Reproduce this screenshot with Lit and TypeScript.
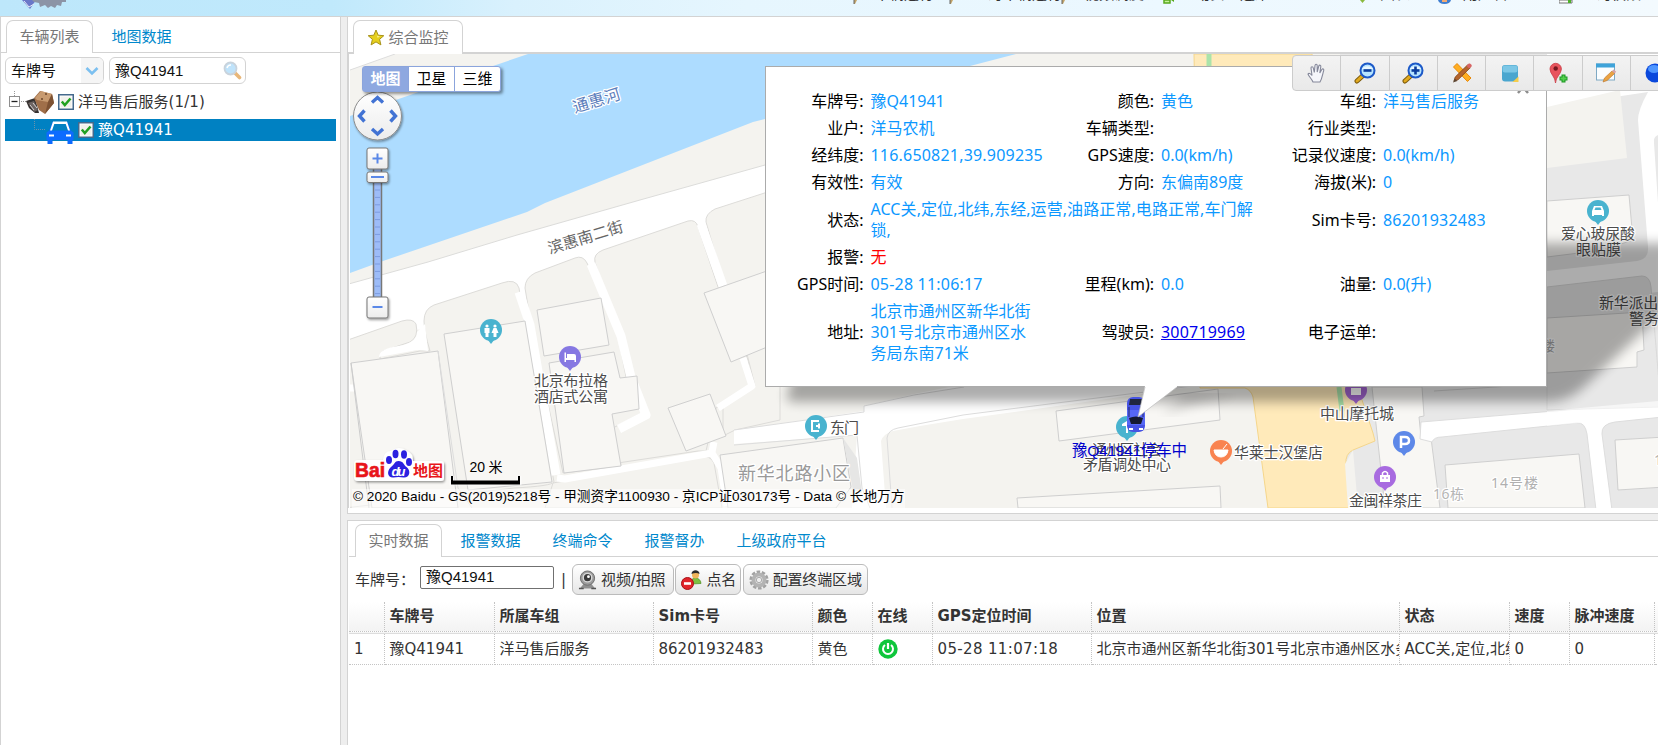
import { LitElement, html, svg, css } from "lit";
import { customElement } from "lit/decorators.js";

const cjk = css`"Noto Sans CJK SC", sans-serif`;

const NAV = [
  { x: 853, label: "", kind: "pen" },
  { x: 874, label: "车辆运行", w: 62 },
  { x: 949, label: "", kind: "pen" },
  { x: 972, label: "查询车辆运行", w: 92 },
  { x: 1061, label: "", kind: "pen" },
  { x: 1084, label: "视频调度", w: 62 },
  { x: 1163, label: "", kind: "plus" },
  { x: 1180, label: "主动安全运维", w: 92 },
  { x: 1360, label: "", kind: "down" },
  { x: 1380, label: "图表", w: 32 },
  { x: 1438, label: "", kind: "user" },
  { x: 1463, label: "用户管理", w: 62 },
  { x: 1559, label: "", kind: "sheet" },
  { x: 1581, label: "查询权限", w: 62 },
];

const INFO: [string, string, string?, number?][] = [
  ["车牌号", "豫Q41941"], ["颜色", "黄色"], ["车组", "洋马售后服务"],
  ["业户", "洋马农机"], ["车辆类型", ""], ["行业类型", ""],
  ["经纬度", "116.650821,39.909235"], ["GPS速度", "0.0(km/h)"], ["记录仪速度", "0.0(km/h)"],
  ["有效性", "有效"], ["方向", "东偏南89度"], ["海拔(米)", "0"],
  ["状态", "ACC关,定位,北纬,东经,运营,油路正常,电路正常,车门解锁,", "", 3], ["Sim卡号", "86201932483"],
  ["报警", "无", "red", 5],
  ["GPS时间", "05-28 11:06:17"], ["里程(km)", "0.0"], ["油量", "0.0(升)"],
  ["地址", "北京市通州区新华北街301号北京市通州区水务局东南71米", "addr"], ["驾驶员", "300719969", "link"], ["电子运单", ""],
];

const COLS = ["", "车牌号", "所属车组", "Sim卡号", "颜色", "在线", "GPS定位时间", "位置", "状态", "速度", "脉冲速度", ""];
const ROW = ["1", "豫Q41941", "洋马售后服务", "86201932483", "黄色", "@", "05-28 11:07:18",
  "北京市通州区新华北街301号北京市通州区水务局", "ACC关,定位,北纬", "0", "0", ""];

const star = svg`<svg width="18" height="17" viewBox="0 0 17 17"><path d="M8.500 1l2.200 5.200 5.600.5-4.200 3.600 1.300 5.600-4.900-3-4.900 3 1.300-5.600L.7 6.700l5.600-.5z" fill="#e6cf1c" stroke="#a8931a" stroke-width="1"/><path d="M8.500 3.500l1.300 3.600 2.700.4-2.400 1.200z" fill="#fdf7a0"/></svg>`;
const search = svg`<svg width="19" height="19" viewBox="0 0 19 19"><path d="M11.500 11.500l5 5" stroke="#e8b77a" stroke-width="3.600" stroke-linecap="round"/><circle cx="7.500" cy="7.500" r="6" fill="#bfe3fb" stroke="#c9d3dc" stroke-width="1.800"/><path d="M4 7a4 4 0 0 1 4-3" stroke="#fff" stroke-width="1.500" fill="none"/></svg>`;
const check = svg`<svg width="16" height="16" viewBox="0 0 16 16"><rect x=".75" y=".75" width="14.500" height="14.500" fill="#fff" stroke="#44698c" stroke-width="1.500"/><rect x="2.500" y="2.500" width="11" height="11" fill="#f1f1ec"/><path d="M3.800 7.500l3 3.500 5.700-6.500" fill="none" stroke="#21a121" stroke-width="2.500"/></svg>`;
const crate = svg`<svg width="29" height="24" viewBox="0 0 29 24"><path d="M0 11l9-3 4 15-4 0-6-5z" fill="#35302f"/><path d="M2 13l6-2 4 9-4 2z" fill="#6d6462"/><path d="M8 8l6-7 12 3 2 9-9 11-6-4z" fill="#a06f49"/><path d="M9 8l6-7 11 3-4 8-11-2z" fill="#c79a70"/><path d="M22 12l4-8 2 9-9 11z" fill="#7d5233"/><circle cx="16" cy="9" r="1" fill="#6b462b"/><circle cx="20" cy="4" r="1" fill="#6b462b"/><path d="M4 15l4 5M7 13l4 5" stroke="#eee" stroke-width=".8"/></svg>`;
const carFront = svg`<svg width="28" height="24" viewBox="0 0 28 24"><path d="M6.500 2h15l3.300 8.500 2.700 2V20h-1v4h-5v-4H6.500v4h-5v-4h-1v-7.500l2.700-2z" fill="#0d6bff"/><path d="M8 3.500h12l2.500 7H5.500z" fill="#0081c2"/><path d="M7 1.500h14l3 9h-2L19.700 4H8.300L6 10.500H4z" fill="#fff"/><path d="M3 15.500h5M20 15.500h5" stroke="#fff" stroke-width="1.800"/></svg>`;

const mag = (plus: boolean) => svg`<svg width="22" height="22" viewBox="0 0 22 22"><path d="M3 19l5.500-5" stroke="#7c5a0c" stroke-width="5" stroke-linecap="round"/><path d="M3 19l5-4.600" stroke="#e0a91f" stroke-width="3" stroke-linecap="round"/><circle cx="13.500" cy="8.500" r="7" fill="#b6e4ff" stroke="#1c59c8" stroke-width="2"/><path d="M8 7a6 4.500 0 0 1 11 0z" fill="#fff" opacity=".7"/><path d="M9.500 8.500h8" stroke="#0b3c9d" stroke-width="2.600"/>${plus ? svg`<path d="M13.500 4.500v8" stroke="#0b3c9d" stroke-width="2.600"/>` : ""}</svg>`;

const TOOLS = [
  svg`<svg width="22" height="22" viewBox="0 0 22 22"><path d="M7 20c-1-3-4-5-5-8 1-1.500 3 0 4 1.500L5 6c0-1.700 2-1.700 2.300 0l1 4.500L9 3.500c.3-1.700 2.200-1.500 2.200.2V10l1.600-6c.6-1.500 2.300-1 2 .7L13.800 11l2-3.500c1-1.200 2.400-.3 1.900 1.100-1 3-1.500 8-3.700 11.400z" fill="#f5f6fb" stroke="#85889a" stroke-width="1.100"/></svg>`,
  mag(false),
  mag(true),
  svg`<svg width="22" height="22" viewBox="0 0 22 22"><path d="M2.500 5L6 1.500 20 16l-3.500 3.500z" fill="#ffae21" stroke="#e8890a"/><path d="M3 19l1.200-4L16.500 3l2.800 2.700L7 17.800z" fill="#b4642c" stroke="#814114" stroke-width=".8"/><path d="M15.500 4l2-2.200c1.200-1.200 4.200 1.400 3 2.800l-2.300 2z" fill="#d86464"/><path d="M2 20.500l1.700-4 2.700 2.500z" fill="#5c4633"/></svg>`,
  svg`<svg width="22" height="22" viewBox="0 0 22 22"><rect x="3" y="3" width="16" height="16.500" rx="3" fill="#4aa6cf"/><rect x="3.500" y="3.500" width="15" height="7" rx="2.500" fill="#7cc7e6"/><path d="M19.500 14.500v5.500h-6z" fill="#f5cd4c"/></svg>`,
  svg`<svg width="22" height="22" viewBox="0 0 22 22"><path d="M8.500 21C8.500 15 3 12 3 7a5.700 5.700 0 0 1 11.400 0c0 5-5.900 8-5.900 14z" fill="#e8545d" stroke="#c93a44" stroke-width=".8"/><circle cx="8.700" cy="6.500" r="2.200" fill="#751820"/><path d="M16.500 12.500v8M12.500 16.500h8" stroke="#1c9a24" stroke-width="4"/><path d="M16.500 13.500v6M13.500 16.500h6" stroke="#56cf4f" stroke-width="1.800"/></svg>`,
  svg`<svg width="22" height="22" viewBox="0 0 22 22"><rect x="1.500" y="2" width="18" height="16" fill="#fafdff" stroke="#7fa9c4"/><path d="M1 1.500h19v4H1z" fill="#3fa3d9"/><path d="M8 20l1.500-4L17 9l2.600 2.500-7.500 7z" fill="#eaa343" stroke="#b9722a" stroke-width=".6"/><path d="M17 9l1.500-1.500 2.700 2.300-1.600 1.700z" fill="#d9a4a8"/></svg>`,
  svg`<svg width="22" height="22" viewBox="0 0 22 22"><circle cx="11" cy="11" r="9.500" fill="#0a48dc"/><ellipse cx="10" cy="7" rx="6" ry="4" fill="#4e96ff"/></svg>`,
];

const BTNS = [
  { w: 102, label: "视频/拍照", icon: svg`<svg width="19" height="20" viewBox="0 0 20 20"><path d="M2 19l4-5h8l4 5z" fill="#909090"/><path d="M1 19h5M14 19h5" stroke="#555" stroke-width="1.500"/><circle cx="10" cy="8" r="7.500" fill="#9b9b9b" stroke="#6e6e6e"/><circle cx="10" cy="7.500" r="4.500" fill="#3b3b3b" stroke="#d8d8d8" stroke-width="1.500"/><circle cx="11" cy="6.500" r="1.500" fill="#fff"/></svg>` },
  { w: 66, label: "点名", icon: svg`<svg width="21" height="20" viewBox="0 0 21 20"><path d="M10 14c0-5 2-6 4.500-6S20 10 20 13.500z" fill="#7dc242" stroke="#4f8d22" stroke-width=".7"/><circle cx="14.500" cy="5" r="3.500" fill="#f0b55b"/><path d="M10.500 4c0-5 8-5 8 0-2-1.500-5-1.500-8 0z" fill="#2b2b2b"/><circle cx="6.500" cy="13.500" r="6" fill="#e0242a" stroke="#a80e14"/><path d="M3 13.500h7" stroke="#fff" stroke-width="2.600"/></svg>` },
  { w: 125, label: "配置终端区域", icon: svg`<svg width="20" height="20" viewBox="0 0 20 20"><circle cx="10" cy="10" r="7.800" fill="none" stroke="#a2a2a2" stroke-width="3.600" stroke-dasharray="3.300 1.600"/><circle cx="10" cy="10" r="5.500" fill="none" stroke="#b3b3b3" stroke-width="4"/><circle cx="10" cy="10" r="2.700" fill="#ededed" stroke="#8e8e8e" stroke-width=".7"/></svg>` },
];

const pin = (x: number, y: number, c: string, g: unknown) => svg`<g transform="translate(${x} ${y})"><path d="M-3.500 9.500L0 14l3.500-4.500z" fill=${c}/><circle r="11" fill=${c}/>${g}</g>`;
const lab = (x: number, y: number, w: number, t: string, c = "#4c4c4c", size = 15, extra = "") => svg`<text class="lab" x=${x} y=${y - 1} fill=${c} font-size=${size} textLength=${w} transform=${extra}>${t}</text>`;

@customElement("monitor-map")
class MonitorMap extends LitElement {
  static styles = css`
    :host { display: block; position: relative; width: 1308px; height: 454px; overflow: hidden; font: 15px/21px "Liberation Sans", ${cjk}; }
    svg { display: block; }
    .over { position: absolute; }
    .lab { font-family: "Noto Sans", ${cjk}; paint-order: stroke; stroke: #fff; stroke-width: 2.5px; stroke-linejoin: round; }
    .logo { font-family: "Liberation Sans", ${cjk}; font-weight: 700; }
    .b { fill: #f8f7f4; stroke: #cfcfcf; }
    .l { fill: #f4f3ef; stroke: #dddcd9; }
    .g { fill: #e8e8e8; stroke: #dadada; }
    .w { fill: #fff; }
    .types { left: 12px; top: 12px; display: flex; height: 24px; border: 1px solid #8ba4dc; border-radius: 3px; background: #fff; box-shadow: 2px 2px 3px rgba(0,0,0,.4); }
    .types span { width: 45px; text-align: center; line-height: 24px; color: #000; border-left: 1px solid #8ba4dc; }
    .types .on { border: 0; background: #8ea8e0; color: #fff; font-weight: 700; }
    .copy { left: 2px; bottom: 0; height: 19px; line-height: 16px; font-size: 13.65px; padding: 0 1px; white-space: nowrap; background: rgba(255,255,255,.5); color: #000; }
    .popup { left: 415px; top: 12px; width: 782px; height: 321px; border: 1px solid #ababab; background: #fff; box-sizing: border-box; padding-top: 21px; font: 16px/21px "Noto Sans", ${cjk}; color: #000; }
    .grid { display: grid; grid-template-columns: 97.500px 173.500px 117px 100px 122px 150px; align-items: center; }
    .k { text-align: right; white-space: nowrap; padding: 3px 0; }
    .v { color: #0c98ff; padding: 3px 0 3px 7px; min-height: 21px; }
    .num { letter-spacing: .2px; }
    .s3 { grid-column: span 3; width: 386px; word-break: break-all; letter-spacing: .08px; }
    .s5 { grid-column: span 5; }
    .red { color: #f00; }
    .addr { width: 164px; word-break: break-all; }
    .link { color: #00e; text-decoration: underline; }
    .tools { left: 942px; top: 1px; display: flex; box-sizing: border-box; height: 36px; border: 1px solid #ccc; border-radius: 4px; background: linear-gradient(#f3f3f3, #e9e9e9); }
    .tools span { width: 47.300px; border-right: 1px solid #ccc; display: flex; align-items: center; justify-content: center; }
  `;

  private base() {
    return svg`
      <rect x="350" y="54" width="1308" height="454" fill="#f4f3ef"/>
      <path class="w" d="M350 54h45l-45 16z"/><path d="M350 70l45-16" stroke="#ddd"/>
      <path fill="#addcff" d="M528 54L493 66 350 116v157l33-12L527 212l18-9L753 122 765 119l165-40 40-13 46-12z"/>
      <path class="w" stroke="#dcdcda" d="M345 285L428 262 517 235 640 200 790 158v30L706 212 350 312z"/>
      <path class="w" d="M350 310L430 285 600 240 780 188v60L350 345z"/>
      <path class="l" d="M345 341L402 321q11-3 14 3 3 13-6 18l-27 9q-4 4-3 8l40-8 10 0q-6-20-6-30 0-12 10-16l68-22q14-5 17 5l5 32 30 162q-2 4-40 6L345 508z"/>
      <path class="l" d="M563 473L532 330 525 288q0-10 10-15l40-15q8-3 12 5l30 67 9 47 22 24 2 12-33 18 4 35z"/>
      <path class="l" d="M595 262q-2-8 8-12l85-29q8-2 10 6l20 60 30 73 4 27-36 21-10 43-8 0-87 13-2-34 33-17q4-4-1-14l-14-29-13-47z"/>
      <path class="l" d="M724 283L706 222q-1-8 9-13L780 188V420L735 430l-12 6 0-30 32-20-10-40z"/>
      <path d="M553 483L700 456q10-1 14 7L722 508H545z" class="l"/>
      <g stroke="#fff" fill="none" stroke-width="9" stroke-linejoin="round">
        <path d="M591 264l30 72 10 41 15 38-27 14M519 292l11 33 26 150M701 224l22 62"/>
        <path d="M557 478l8 1 147-26 9 15 6 38M743 358l9 28-34 22M714 442l-2 10M350 388h4" stroke-width="7"/>
      </g>
      <path class="w" d="M379 357q0-7 14-10 24-3 24-15l8-8 3 27q-10-2-16 0z"/>
      <path class="b" d="M351 363l87-12 20 157H372z"/><path d="M351 363l18 145" stroke="#ccc"/>
      <path class="b" d="M444 334l81-13 27 161-84 8z"/><path d="M438 351l20 137 14 20" stroke="#ddd" fill="none"/>
      <path class="b" d="M537 310l64-12 8 47-65 11z"/>
      <path class="b" d="M549 363l65-11 6 26 17-2 2 33-27 5 9 52-57 7z"/>
      <path class="b" d="M704 293l80-28V340L731 362z"/>
      <path class="b" d="M668 408l42-14 16 42-40 15z"/>
      <path class="w" d="M734 430l30-4 100-15v-5l50-12 50-10 255-1-162 23-94 13-43 7-27 5q-10 3-12 10l5 67h-34L857 435l-123 9z"/>
      <path fill="none" stroke="#ddd" d="M734 445l123-10 5 53 8 20M892 508l-5-70q1-8 11-10l65-13 94-12 160-20M734 430l130-18v-6l50-11 50-8"/>
      <path class="b" d="M720 455l123-17 8 49-15 21H728z"/><path fill="#e6e6e5" d="M843 438l14 20 5 35-9-3z"/>
      <path class="b" d="M1056 411l162-22 2 31-161 21z"/><path class="b" d="M1017 498l203-12 1 22H1018z"/>
      <path fill="#e8e8e8" d="M1340 54H1658V508H1340z"/>
      <path fill="#ffeaba" stroke="#f5d68b" d="M1194 54h118l46 334 15 45 2 8-22 9q-8 4-7 14l4 44h-82l-15-111q-2-7-8-9h-45z"/>
      <path d="M1209 54v12M1339 387l3 24" stroke="#abe3aa" stroke-width="5"/>
      <path class="b" d="M1372 387h50l2 29-5 1 2 20 10 1 9 70h-55z"/>
      <path fill="#f4f3ef" d="M1353 450l5 58h-10l-3-44z"/>
      <path class="w" stroke="#ddd" d="M1421 422L1663 402v15l-48 5q-14 2-13 12l10 76h-16l-9-76q-2-12-10-11l-135 14q-8 0-10 5l-12-3z"/>
      <path class="b" d="M1445 465l134-11 6 54H1448z"/><path class="b" d="M1615 440l50-3v50l-47 3z"/>
      <path class="w" d="M1547 54h111v38h-10l-40 6-61 16z"/>
      <path fill="#f4f3ef" d="M1547 107l73-17 7 68-80 10z"/>
      <path class="w" d="M1648 92h10v200l-111 12v-33l90-10q12-2 11-14l-10-127q0-10 10-28z"/>
      <path fill="#e8e8e8" d="M1658 135q-5 2-4 8l4 60z"/>
      <path class="b" d="M1547 201l82-6 4 45-30 10-56 7z"/>
      <path class="g" d="M1547 287l95-11q8 0 9 11l10 120-114 3z"/>
      <path class="b" d="M1547 318l95-6 2 38-7 2v15l-90 6z"/>
      <path d="M1434 391l77-5" stroke="#ccc"/>
      <path class="w" d="M1547 411l111-10v15l-111 10z" opacity=".6"/>
    `;
  }

  private pois() {
    return svg`
      ${lab(0, 0, 49, "通惠河", "#5b7dbb", 16, "translate(575 114) rotate(-17)")}
      ${lab(0, 0, 78, "滨惠南二街", "#666", 15.5, "translate(550 255) rotate(-17)")}
      ${pin(491, 330, "#49b3cf", svg`<g fill="#fff"><circle cx="-4" cy="-4" r="1.600"/><circle cx="4" cy="-4" r="1.600"/><path d="M-6.500-2h5v5h-1v4h-3V3h-1zM2.500-2h3l2 5h-2v4h-3V3h-2z"/></g>`)}
      ${pin(570, 357, "#8678e2", svg`<path d="M-5.500 5v-9.500H-4V1h1v-4h7q2 0 2 2v6H4.500V3H-4v2z" fill="#fff"/>`)}
      ${lab(534, 387, 74, "北京布拉格")}${lab(534, 403, 74, "酒店式公寓")}
      ${pin(816, 426, "#49b3cf", svg`<path d="M3-5h-7V5h7M0 0h4M3-2.500v5" stroke="#fff" fill="none" stroke-width="2"/>`)}
      ${lab(830, 434, 29, "东门")}
      ${lab(738, 481, 112, "新华北路小区", "#999", 18)}
      ${pin(1127, 427, "#49b3cf", svg`<path d="M-5-3l5-3 5 3v2h-4v7h-2v-7h-4z" fill="#fff"/>`)}
      ${lab(1092, 456, 70, "通州区社会")}${lab(1083, 471, 88, "矛盾调处中心")}
      ${pin(1221, 451, "#f98350", svg`<path d="M-7-1H7Q6 6 0 6T-7-1zM2-2l4-5" fill="#fff" stroke="#fff"/>`)}
      ${lab(1234, 459, 89, "华莱士汉堡店")}
      ${pin(1356, 390, "#a164cf", svg`<path d="M-5-2H5v7H-5z" fill="#fff"/>`)}
      ${lab(1320, 420, 74, "中山摩托城")}
      ${pin(1404, 442, "#5d88e8", svg`<path d="M-3 6v-11H1q4 0 4 3.500T1 2H-3" fill="none" stroke="#fff" stroke-width="2.500"/>`)}
      ${pin(1385, 477, "#a86be0", svg`<path d="M-5-2H5v7H-5z" fill="#fff"/><path d="M-2.500-1.500V-4q2.500-3 5 0v2.500" fill="none" stroke="#fff" stroke-width="1.500"/><path d="M-2 0v2M2 0v2" stroke="#a86be0"/>`)}
      ${lab(1349, 507, 73, "金闽祥茶庄")}
      ${lab(1433, 500, 31, "16栋", "#b5b5b5", 14)}${lab(1491, 489, 47, "14号楼", "#b0b0b0", 14)}${lab(1654, 466, 47, "15号楼", "#b0b0b0", 14)}
      ${pin(1598, 211, "#49b3cf", svg`<path d="M-6 5V0l2-5h8l2 5v5h-2V4h-8v1z" fill="#fff"/><path d="M-3.500-1l1-2.500h5L3.500-1z" fill="#49b3cf"/>`)}
      ${lab(1561, 240, 74, "爱心玻尿酸")}${lab(1576, 256, 45, "眼贴膜")}
      ${lab(1599, 309, 74, "新华派出所")}${lab(1629, 325, 45, "警务站")}${lab(1524, 352, 31, "1号楼", "#aaa", 14)}
    `;
  }

  private controls() {
    return svg`
      <g filter="url(#sm)"><circle cx="377.500" cy="116" r="24" fill="url(#btn)" stroke="#8d8d8d"/></g>
      <path fill="none" stroke="#4273d4" stroke-width="3.400" d="M372 102.500l5.500-5 5.500 5M372 129l5.500 5 5.500-5M364.500 110.500l-5 5.500 5 5.500M390.500 110.500l5 5.500-5 5.500"/>
      <path d="M373.500 165h8v135h-8z" fill="#9dbcf8" stroke="#777" stroke-width="1.500"/>
      ${Array.from({ length: 15 }, (_, i) => svg`<path d="M375 ${190 + i * 7.400}h5" stroke="#7c9ce0"/>`)}
      <g filter="url(#sm)" stroke="#777" fill="url(#btn)"><rect x="367" y="148" width="21" height="21" rx="2"/><rect x="367" y="172" width="21" height="10.500" rx="2"/><rect x="367" y="297" width="21" height="21" rx="2"/></g>
      <path d="M372.500 158.500h10M377.500 153.500v10M371 177h13M372.500 307h10" stroke="#5a88e8" stroke-width="2"/>
      <path d="M358 460h25q1-9 8-9 8-6 16 0 6 2 6 10h28q3 0 3 3v14q0 3-3 3H358q-4 0-4-4v-13q0-4 4-4z" fill="#fff" filter="url(#sm)"/>
      <g fill="#2b21e0"><ellipse cx="389" cy="460" rx="3" ry="4"/><ellipse cx="395.500" cy="454" rx="3" ry="4.200"/><ellipse cx="404" cy="454.500" rx="3" ry="4.200"/><ellipse cx="409" cy="462" rx="3" ry="4"/><path d="M398.500 461c5 0 5 4 8 6 5 4 3 11-3 10.500q-5-1-10 0c-6 .5-7-6-3-10 4-3 4-6.500 8-6.500z"/></g>
      <text class="logo" x="355" y="477" font-size="20" fill="#e8151a" stroke="#e8151a" stroke-width=".7" textLength="30" lengthAdjust="spacingAndGlyphs">Bai</text>
      <text x="391.500" y="476" font-size="13" fill="#fff" font-weight="700" font-style="italic" textLength="14">du</text>
      <text class="logo" x="413" y="476" font-size="15" fill="#e8151a" textLength="30">地图</text>
      <text x="469.500" y="472" font-size="14" textLength="33">20 米</text>
      <path d="M452 476v7h67v-7" stroke="#fff" stroke-width="5" fill="none" opacity=".6"/><path d="M452 476v7M519 476v7" stroke="#000" stroke-width="2"/><path d="M451 482.500h69" stroke="#000" stroke-width="4"/>
    `;
  }

  render() {
    return html`
      <svg width="1308" height="454" viewBox="350 54 1308 454">
        <defs>
          <linearGradient id="btn" x2="0" y2="1"><stop stop-color="#fff"/><stop offset="1" stop-color="#ececec"/></linearGradient>
          <filter id="sm" x="-20%" y="-20%" width="150%" height="150%"><feDropShadow dx="1" dy="1.500" stdDeviation="1.200" flood-opacity=".4"/></filter>
          <filter id="blur" x="-10%" y="-10%" width="120%" height="120%"><feGaussianBlur stdDeviation="6"/></filter>
        </defs>
        ${this.base()}${this.pois()}
        <path filter="url(#blur)" opacity=".32" d="M795 370L786 398q4 5 10 4L1550 402q20-1 36-17L1670 306V243H1500V370z"/>
        <path filter="url(#blur)" opacity=".15" d="M1185 395h50q-30 6-74 20z"/>
        ${this.controls()}
        <g transform="translate(1136 415)"><rect x="-9" y="-18" width="18" height="35" rx="6" fill="#4653e4"/><rect x="-9" y="-5" width="18" height="15" fill="#5667f5"/><path d="M-6-16H6l1 6H-7z" fill="#20263e"/><path d="M-7 3q7-3 14 0l-2 6H-5z" fill="#151a30"/><path d="M-7-8V2M7-8V2" stroke="#252b70"/><path d="M-7 14h4M3 14h4" stroke="#fff" stroke-width="2"/></g>
        <text x="1072" y="456" font-size="15.500" fill="#00c" textLength="115">豫Q41941停车中</text>
      </svg>
      <div class="over types"><span class="on">地图</span><span>卫星</span><span>三维</span></div>
      <div class="over copy">© 2020 Baidu - GS(2019)5218号 - 甲测资字1100930 - 京ICP证030173号 - Data © 长地万方</div>
      <div class="over popup"><div class="grid">
        ${INFO.map(([k, v, c = "", s]) => html`<div class="k">${k}:</div><div class="v ${c} ${s ? "s" + s : ""} ${/^[\d.,:\- ]+$/.test(v) ? "num" : ""}">${v}</div>`)}
      </div></div>
      <svg class="over" style="left:765px;top:330px" width="64" height="36" viewBox="1115 384 64 36"><path d="M1145 384v2L1138 417 1177 387v-3z" fill="#fff"/><path d="M1145 387L1138 417l39-30" fill="none" stroke="#bbb" stroke-width=".7"/></svg>
      <svg class="over" style="left:1166px;top:26px" width="14" height="14" viewBox="0 0 14 14"><path d="M2 1l10 12M12 1L2 13" stroke="#8c8c8c" stroke-width="2.500"/></svg>
      <div class="over tools">${TOOLS.map((t) => html`<span>${t}</span>`)}</div>
    `;
  }
}

@customElement("app-root")
class AppRoot extends LitElement {
  static styles = css`
    :host { display: flex; flex-direction: column; width: 1658px; height: 745px; overflow: hidden; background: #fff; color: #333; font: 15px/20px "DejaVu Sans", ${cjk}; }
    svg { display: block; flex: none; }
    header { height: 16px; flex: none; position: relative; overflow: hidden; background: linear-gradient(90deg, #bde7fb, #c0e9fc 20%, #d9f1fd 31%, #e6f6fe 45%, #ecf8ff 70%, #f3fafe); border-bottom: 1px solid #d3d3d3; }
    header > * { position: absolute; top: -14px; white-space: nowrap; line-height: 16px; }
    header svg { top: 0; }
    main { flex: 1; display: grid; grid-template-columns: 341px 6px 1fr; min-height: 0; background: #eee; }
    .left { background: #fff; border: solid #d3d3d3; border-width: 0 1px; }
    .tabs { display: flex; gap: 5.500px; height: 36px; box-sizing: border-box; border-bottom: 1px solid #d3d3d3; padding: 3px 0 0 5px; }
    .tab { box-sizing: border-box; height: 33px; line-height: 32px; padding: 0 12.500px; border: 1px solid transparent; color: #0088cc; white-space: nowrap; display: flex; align-items: center; gap: 5px; }
    .tab + .tab { padding-left: 12px; }
    .tab.on { background: #fff; border-color: #d3d3d3; border-bottom: 0; border-radius: 7px 7px 0 0; color: #777; }
    .row { display: flex; align-items: center; }
    .search { gap: 5px; padding: 4px 0 0 4px; font-family: "Liberation Sans", ${cjk}; color: #111; }
    .box { box-sizing: border-box; border: 1px solid #d3d3d3; border-radius: 6px; height: 27px; display: flex; align-items: center; justify-content: space-between; padding-left: 5px; overflow: hidden; }
    .arrow { width: 22px; height: 27px; background: #f5f5f5; display: flex; align-items: center; justify-content: center; }
    .tree { padding: 5px 4px; }
    .node { height: 25px; padding-left: 4px; letter-spacing: .1px; }
    .node.sel { height: 22px; margin-top: 5px; background: #0081c2; color: #fff; padding-left: 27px; margin-bottom: 2px; letter-spacing: .05px; line-height: 24px; }
    .sel svg + svg { margin-top: 3px; }
    .right { display: flex; flex-direction: column; min-width: 0; }
    .pane { background: #fff; border-left: 1px solid #d3d3d3; }
    .top { height: 497px; border-bottom: 1px solid #d3d3d3; box-sizing: border-box; }
    .top .tabs { height: 37px; border-bottom-width: 2px; }
    .top .tab.on { height: 34px; gap: 4px; padding-right: 13px; }
    .mapwrap { border-left: 1px solid #d3d3d3; padding-left: 1px; }
    .bottom { margin-top: 6px; flex: 1; border-top: 1px solid #d3d3d3; padding-left: 1px; }
    .bottom .tabs { padding-left: 6px; }
    .bar { height: 45px; padding-left: 6px; }
    .inp { box-sizing: border-box; width: 134px; height: 23px; border: 1px solid #707070; border-radius: 2px; padding-left: 5px; line-height: 20px; margin: -4px 7px 0 5px; color: #111; font-family: "Liberation Sans", ${cjk}; }
    .btn { box-sizing: border-box; height: 31px; border: 1px solid #bbb; border-radius: 6px; background: linear-gradient(#fff, #e6e6e6); display: flex; align-items: center; gap: 4px; padding-left: 5px; margin-right: 1.300px; font-size: 15px; white-space: nowrap; letter-spacing: -.15px; }
    .tbl { display: grid; grid-template-columns: 35.500px 110px 159px 159px 60px 60px 159px 308px 110px 60px 85px 1fr; }
    .th, .td { box-sizing: border-box; border-right: 1px dotted #c4c4c4; border-bottom: 1px dotted #c4c4c4; padding-left: 5px; overflow: hidden; white-space: nowrap; }
    .th { height: 30px; line-height: 29px; font-weight: 700; background: linear-gradient(#fff, #f3f3f3); }
    .td { height: 31px; line-height: 31px; display: flex; align-items: center; }
    .time { letter-spacing: .35px; }
    .gap { grid-column: 1 / -1; height: 2px; border-bottom: 1px solid #ddd; box-sizing: border-box; background: #f6f6f6; }
  `;

  private navIcon(x: number, kind: string) {
    const art: Record<string, unknown> = {
      pen: svg`<path d="M1 0h3L2 4H1z" fill="#c3a468"/><path d="M1 0v4" stroke="#666"/>`,
      plus: svg`<path d="M1 0h6v3H1z" fill="#c6f09b" stroke="#58a91d" stroke-width="1.500"/><path d="M8 0h3v2z" fill="#58a91d"/>`,
      down: svg`<path d="M0 0h5L2.500 3z" fill="#8ab93e"/>`,
      user: svg`<path d="M0 0h13q-1 4-6.500 4T0 0z" fill="#3f7ed0"/><path d="M4 0h5v2H4z" fill="#f3aa72"/>`,
      sheet: svg`<path d="M0 0h13v3H0z" fill="#fff" stroke="#777"/><path d="M9 0h3v3H9z" fill="#4db128"/>`,
    };
    return html`<svg style="left:${x}px" width="14" height="6">${art[kind]}</svg>`;
  }

  render() {
    return html`
      <header>
        <svg width="60" height="12" style="left:20px"><path d="M2 0h14l-6 9z" fill="#6a78c8"/><path d="M12 0h34v2h-4l-1 4-4-1-2 3-4-2-3 2-3-3-5 2-1-4-5-1z" fill="#8c94a6"/><path d="M4 1l5 6 5-3" stroke="#e7eaf8" fill="none"/></svg>
        ${NAV.map((n) => n.kind ? this.navIcon(n.x, n.kind) : html`<span style="left:${n.x}px;width:${n.w}px">${n.label}</span>`)}
      </header>
      <main>
        <section class="left">
          <div class="tabs"><div class="tab on">车辆列表</div><div class="tab">地图数据</div></div>
          <div class="row search">
            <div class="box" style="width:99px">车牌号<span class="arrow"><svg width="14" height="10" viewBox="0 0 14 10"><path d="M1.500 2L7 7.500 12.500 2" fill="none" stroke="#7cc0f0" stroke-width="2.600"/></svg></span></div>
            <div class="box" style="width:137px;padding-right:3px">豫Q41941${search}</div>
          </div>
          <div class="tree">
            <div class="row node">
              <svg width="17" height="25" viewBox="0 0 17 25"><path d="M5.500 2v5M12 12.500h5" stroke="#999" stroke-dasharray="1 1"/><rect x=".5" y="7.500" width="10" height="10" fill="#fff" stroke="#8e8e8e"/><path d="M2.500 12.500h6" stroke="#222" stroke-width="1.300"/></svg>
              ${crate}<span style="width:3px"></span>${check}<span style="width:4px"></span>洋马售后服务(1/1)
            </div>
            <div class="row node sel"><svg width="14" height="22"><path d="M2.500 0v10.500H14" stroke="#6c93ab" fill="none" stroke-dasharray="1 1"/></svg>${carFront}<span style="width:4px"></span>${check}<span style="width:4px"></span>豫Q41941</div>
          </div>
        </section>
        <span></span>
        <section class="right">
          <div class="pane top">
            <div class="tabs"><div class="tab on">${star}综合监控</div></div>
            <div class="mapwrap"><monitor-map></monitor-map></div>
          </div>
          <div class="pane bottom">
            <div class="tabs"><div class="tab on">实时数据</div><div class="tab">报警数据</div><div class="tab">终端命令</div><div class="tab">报警督办</div><div class="tab">上级政府平台</div></div>
            <div class="row bar">车牌号：<div class="inp">豫Q41941</div>|<span style="width:6px"></span>
              ${BTNS.map((b) => html`<div class="btn" style="width:${b.w}px">${b.icon}${b.label}</div>`)}</div>
            <div class="tbl">
              ${COLS.map((c) => html`<div class="th">${c}</div>`)}
              <div class="gap"></div>
              ${ROW.map((c, i) => html`<div class="td ${i === 6 ? "time" : ""}">${c === "@" ? svg`<svg width="20" height="20" viewBox="0 0 20 20"><circle cx="10" cy="10" r="9.700" fill="#0fc63c"/><path d="M7 6a5 5 0 1 0 6 0" fill="none" stroke="#fff" stroke-width="2"/><path d="M10 4v6" stroke="#fff" stroke-width="2.200"/></svg>` : c}</div>`)}
            </div>
          </div>
        </section>
      </main>
    `;
  }
}
